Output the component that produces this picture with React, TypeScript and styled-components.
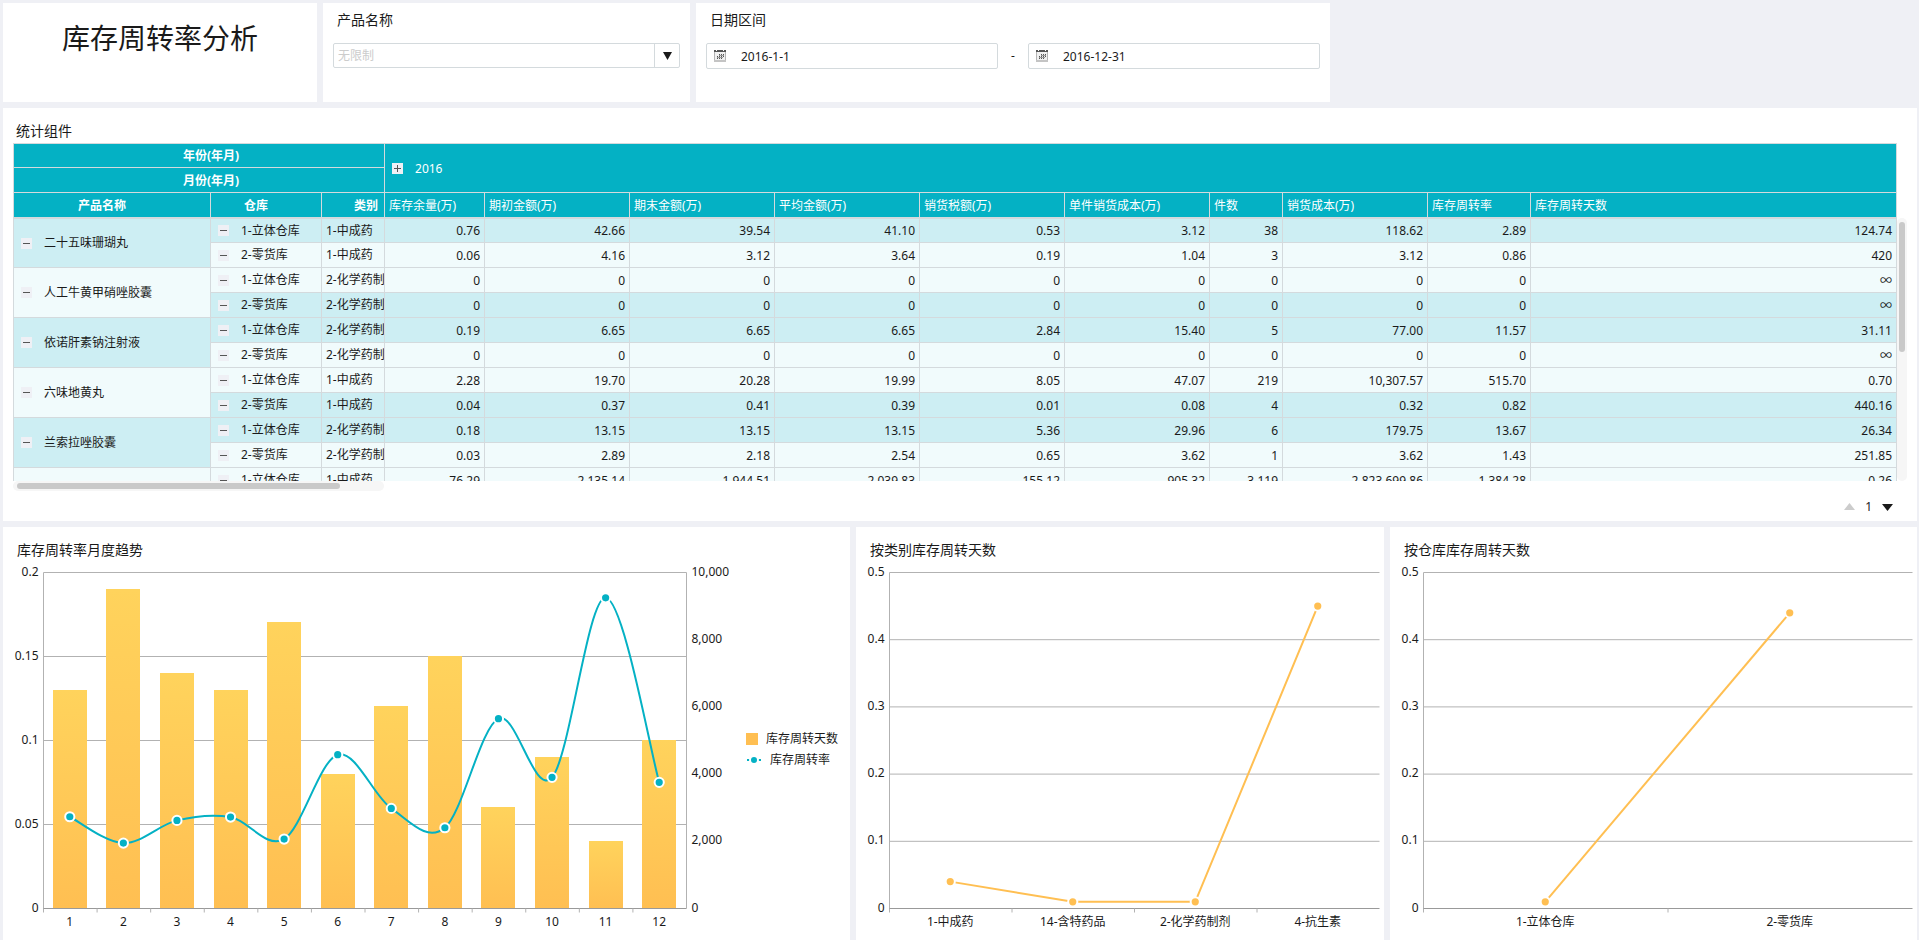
import React, { useId, useLayoutEffect, useRef, useState } from "react";
import styled, { createGlobalStyle } from "styled-components";

const color = {
  page: "#eff0f5",
  panel: "#ffffff",
  text: "#1a1a1a",
  muted: "#cccccc",
  border: "#d4dadd",
  teal: "#04b1c4",
  rowDark: "#cdeef3",
  rowLight: "#f1fbfc",
  amber: "#ffbf52",
  amberLight: "#ffd35c",
  grid: "#b2b2b2",
  axis: "#999999",
};

const GlobalStyle = createGlobalStyle`
  *, *::before, *::after { box-sizing: border-box; }
  body {
    margin: 0;
    background: ${color.page};
    color: ${color.text};
    font-family: "Noto Sans", "Noto Sans CJK SC", sans-serif;
    font-size: 12px;
    line-height: 16px;
  }
  button, input, select { font: inherit; color: inherit; }
`;

const Page = styled.main`
  display: flex;
  flex-direction: column;
  gap: 6px;
  min-height: 100vh;
  padding: 3px 2px 0 3px;
`;

const FilterRow = styled.div`
  display: grid;
  grid-template-columns: 314fr 367fr 634fr 581fr;
  gap: 6px;
`;

const ChartRow = styled.div`
  display: grid;
  grid-template-columns: 847fr 528fr 527fr;
  gap: 6px;
  flex: 1;
`;

const Panel = styled.section`
  min-width: 0;
  background: ${color.panel};
`;

const FilterPanel = styled(Panel)`
  min-height: 99px;
  padding: 7px 10px;
`;

const PageTitle = styled.h1`
  margin: 8px 0 0;
  font-size: 28px;
  line-height: 40px;
  font-weight: 400;
  text-align: center;
`;

const FilterLabel = styled.label`
  display: block;
  padding-left: 4px;
  margin-bottom: 13px;
  font-size: 14px;
  line-height: 20px;
`;

const ComboBox = styled.div`
  position: relative;
  height: 25px;
`;

const Select = styled.select`
  appearance: none;
  width: 100%;
  height: 100%;
  padding: 0 30px 0 4px;
  border: 1px solid ${color.border};
  border-radius: 2px;
  background: transparent;
  color: ${color.muted};
`;

const ComboArrow = styled.span`
  position: absolute;
  top: 1px;
  right: 1px;
  bottom: 1px;
  display: flex;
  align-items: center;
  justify-content: center;
  width: 25px;
  border-left: 1px solid ${color.border};
  pointer-events: none;
`;

const DateRange = styled.div`
  display: flex;
  align-items: center;
`;

const DateField = styled.div`
  display: flex;
  flex: 1;
  align-items: center;
  gap: 15px;
  height: 26px;
  padding-left: 7px;
  border: 1px solid ${color.border};
  border-radius: 2px;
`;

const DateInput = styled.input`
  flex: 1;
  min-width: 0;
  height: 24px;
  padding: 0;
  border: 0;
  background: transparent;
  outline: none;
`;

const DateDash = styled.span`
  width: 30px;
  text-align: center;
`;

const PanelTitle = styled.h2`
  margin: 0;
  font-size: 14px;
  line-height: 20px;
  font-weight: 400;
`;

const TablePanel = styled(Panel)`
  padding: 13px 10px 0;
`;

const TableTitle = styled(PanelTitle)`
  padding-left: 3px;
  margin-bottom: 2px;
`;

const TableFrame = styled.div`
  display: flex;
`;

const TableViewport = styled.div`
  flex: 1;
  min-width: 0;
  height: 338px;
  overflow: hidden;
`;

const DataTable = styled.table`
  width: 100%;
  table-layout: fixed;
  border-collapse: separate;
  border-spacing: 0;
  border: solid ${color.border};
  border-width: 1px 0 0 1px;
`;

const HeadRow = styled.tr<{ $height: number }>`
  height: ${(p) => p.$height}px;
`;

const HeadCell = styled.th<{ $measure?: boolean; $last?: boolean }>`
  padding: ${(p) => (p.$measure ? "1px 4px 0" : "1px 24px 0 4px")};
  overflow: hidden;
  border: solid ${color.border};
  border-width: 0 1px ${(p) => (p.$last ? 2 : 1)}px 0;
  background: ${color.teal};
  color: #ffffff;
  font-weight: ${(p) => (p.$measure ? 400 : 700)};
  text-align: ${(p) => (p.$measure ? "left" : "center")};
  white-space: nowrap;
`;

const BodyRow = styled.tr`
  height: 25px;
  &:first-child { height: 24px; }
`;

const Cell = styled.td<{ $dark: boolean; $number?: boolean }>`
  padding: ${(p) => (p.$number ? "1px 4px 0" : "0 4px")};
  overflow: hidden;
  border: solid ${color.border};
  border-width: 0 1px 1px 0;
  background: ${(p) => (p.$dark ? color.rowDark : color.rowLight)};
  text-align: ${(p) => (p.$number ? "right" : "left")};
  white-space: nowrap;
`;

/* The frozen columns are wider than their pane, so these headings are centred on the full width. */
const WideHeading = styled.div<{ $width: number }>`
  width: ${(p) => p.$width}px;
`;

const NodeLabel = styled.span`
  display: flex;
  align-items: center;
  gap: 12px;
  padding-left: 3px;
`;

const GroupName = styled.span`
  font-weight: 400;
`;

const ToggleButton = styled.button`
  display: flex;
  flex: none;
  width: 11px;
  height: 11px;
  padding: 0;
  border: 0;
  background: ${color.page};
  cursor: pointer;
`;

const VerticalTrack = styled.div`
  width: 10px;
  margin-top: 75px;
  padding: 4px 2px;
  border-radius: 5px;
  background: #f6f6f6;
`;

const VerticalThumb = styled.div`
  height: 130px;
  border-radius: 3px;
  background: #c9c9c9;
`;

const HorizontalTrack = styled.div`
  width: 371px;
  height: 10px;
  padding: 2px 4px;
  border-radius: 5px;
  background: #f6f6f6;
`;

const HorizontalThumb = styled.div`
  width: 323px;
  height: 6px;
  border-radius: 3px;
  background: #c9c9c9;
`;

const Pager = styled.nav`
  display: flex;
  align-items: center;
  justify-content: flex-end;
  gap: 10px;
  height: 30px;
  padding: 2px 14px 0;
`;

const PagerButton = styled.button`
  display: flex;
  padding: 0;
  border: 0;
  background: none;
  color: ${color.text};
  &:disabled { color: ${color.muted}; }
`;

const ChartPanel = styled(Panel)`
  padding-top: 13px;
`;

const ChartTitle = styled(PanelTitle)`
  padding: 0 14px;
  margin-bottom: 3px;
`;

const ChartSvg = styled.svg`
  display: block;
  width: 100%;
  height: 377px;
  font-size: 12px;
  fill: ${color.text};
`;

const measures: [string, number | undefined][] = [
  ["库存余量(万)", 100],
  ["期初金额(万)", 145],
  ["期末金额(万)", 145],
  ["平均金额(万)", 145],
  ["销货税额(万)", 145],
  ["单件销货成本(万)", 145],
  ["件数", 73],
  ["销货成本(万)", 145],
  ["库存周转率", 103],
  ["库存周转天数", undefined],
];

type Row = { store: string; kind: string; dark: boolean; values: string[] };
type Group = { name: string; dark: boolean; rows: Row[] };

const CHEM = "2-化学药制剂";
const HERB = "1-中成药";
const line = (store: string, kind: string, dark: boolean, values: string): Row => ({
  store,
  kind,
  dark,
  values: values.split(" "),
});

const groups: Group[] = [
  {
    name: "二十五味珊瑚丸",
    dark: true,
    rows: [
      line("1-立体仓库", HERB, true, "0.76 42.66 39.54 41.10 0.53 3.12 38 118.62 2.89 124.74"),
      line("2-零货库", HERB, false, "0.06 4.16 3.12 3.64 0.19 1.04 3 3.12 0.86 420"),
    ],
  },
  {
    name: "人工牛黄甲硝唑胶囊",
    dark: false,
    rows: [
      line("1-立体仓库", CHEM, false, "0 0 0 0 0 0 0 0 0 ∞"),
      line("2-零货库", CHEM, true, "0 0 0 0 0 0 0 0 0 ∞"),
    ],
  },
  {
    name: "依诺肝素钠注射液",
    dark: true,
    rows: [
      line("1-立体仓库", CHEM, true, "0.19 6.65 6.65 6.65 2.84 15.40 5 77.00 11.57 31.11"),
      line("2-零货库", CHEM, false, "0 0 0 0 0 0 0 0 0 ∞"),
    ],
  },
  {
    name: "六味地黄丸",
    dark: false,
    rows: [
      line("1-立体仓库", HERB, false, "2.28 19.70 20.28 19.99 8.05 47.07 219 10,307.57 515.70 0.70"),
      line("2-零货库", HERB, true, "0.04 0.37 0.41 0.39 0.01 0.08 4 0.32 0.82 440.16"),
    ],
  },
  {
    name: "兰索拉唑胶囊",
    dark: true,
    rows: [
      line("1-立体仓库", CHEM, true, "0.18 13.15 13.15 13.15 5.36 29.96 6 179.75 13.67 26.34"),
      line("2-零货库", CHEM, false, "0.03 2.89 2.18 2.54 0.65 3.62 1 3.62 1.43 251.85"),
    ],
  },
  {
    name: "",
    dark: false,
    rows: [
      line("1-立体仓库", HERB, false, "76.29 2,135.14 1,944.51 2,039.83 155.12 905.32 3,119 2,823,699.86 1,384.28 0.26"),
    ],
  },
];

function Toggle({ open, label }: { open: boolean; label: string }) {
  return (
    <ToggleButton type="button" aria-expanded={open} aria-label={label}>
      <svg width="11" height="11" viewBox="0 0 11 11" shapeRendering="crispEdges">
        <path d={open ? "M2 5.5H9" : "M2 5.5H9M5.5 2V9"} stroke="#555" fill="none" />
      </svg>
    </ToggleButton>
  );
}

function CalendarIcon() {
  return (
    <svg width="12" height="12" viewBox="0 0 12 12" shapeRendering="crispEdges" aria-hidden="true">
      <rect x="0.5" y="1.5" width="11" height="9" fill="#f0f0f0" stroke="#b4b4b4" />
      <path d="M0 11H12" stroke="#c4c4c4" strokeWidth="2" />
      <path d="M0 1H12" stroke="#555" strokeWidth="2" />
      <path d="M2 0.5H3M9 0.5H10" stroke="#fff" />
      <path d="M5 4.5H10M3 6.5H10M3 8.5H8" stroke="#555" strokeDasharray="1 1" />
      <path d="M5 5.5H10M3 7.5H9" stroke="#999" />
    </svg>
  );
}

function StatTable() {
  return (
    <TablePanel>
      <TableTitle>统计组件</TableTitle>
      <TableFrame>
        <TableViewport>
          <DataTable>
            <colgroup>
              <col width="197" />
              <col width="111" />
              <col width="63" />
              {measures.map(([name, width]) => (
                <col key={name} width={width} />
              ))}
            </colgroup>
            <thead>
              <HeadRow $height={24}>
                <HeadCell colSpan={3}>
                  <WideHeading $width={386}>年份(年月)</WideHeading>
                </HeadCell>
                <HeadCell colSpan={10} rowSpan={2} $measure>
                  <NodeLabel>
                    <Toggle open={false} label="展开 2016" />
                    2016
                  </NodeLabel>
                </HeadCell>
              </HeadRow>
              <HeadRow $height={25}>
                <HeadCell colSpan={3}>
                  <WideHeading $width={386}>月份(年月)</WideHeading>
                </HeadCell>
              </HeadRow>
              <HeadRow $height={26}>
                <HeadCell $last>产品名称</HeadCell>
                <HeadCell $last>仓库</HeadCell>
                <HeadCell $last>
                  <WideHeading $width={80}>类别</WideHeading>
                </HeadCell>
                {measures.map(([name]) => (
                  <HeadCell key={name} $last $measure>
                    {name}
                  </HeadCell>
                ))}
              </HeadRow>
            </thead>
            <tbody>
              {groups.map((group) =>
                group.rows.map((row, index) => (
                  <BodyRow key={group.name + row.store}>
                    {index === 0 && (
                      <Cell as="th" scope="rowgroup" rowSpan={group.rows.length} $dark={group.dark}>
                        {group.name && (
                          <NodeLabel>
                            <Toggle open label={`收起 ${group.name}`} />
                            <GroupName>{group.name}</GroupName>
                          </NodeLabel>
                        )}
                      </Cell>
                    )}
                    <Cell $dark={row.dark}>
                      <NodeLabel>
                        <Toggle open label={`收起 ${row.store}`} />
                        {row.store}
                      </NodeLabel>
                    </Cell>
                    <Cell $dark={row.dark}>{row.kind}</Cell>
                    {row.values.map((value, i) => (
                      <Cell key={measures[i][0]} $dark={row.dark} $number>
                        {value}
                      </Cell>
                    ))}
                  </BodyRow>
                )),
              )}
            </tbody>
          </DataTable>
        </TableViewport>
        <VerticalTrack>
          <VerticalThumb />
        </VerticalTrack>
      </TableFrame>
      <HorizontalTrack>
        <HorizontalThumb />
      </HorizontalTrack>
      <Pager aria-label="分页">
        <PagerButton type="button" disabled aria-label="上一页">
          <svg width="11" height="8" viewBox="0 0 11 8">
            <path d="M5.5 0L11 7H0Z" fill="currentColor" />
          </svg>
        </PagerButton>
        <span>1</span>
        <PagerButton type="button" aria-label="下一页">
          <svg width="11" height="8" viewBox="0 0 11 8">
            <path d="M0 1H11L5.5 8Z" fill="currentColor" />
          </svg>
        </PagerButton>
      </Pager>
    </TablePanel>
  );
}

function useWidth() {
  const ref = useRef<SVGSVGElement>(null);
  const [width, setWidth] = useState(0);
  useLayoutEffect(() => {
    const node = ref.current;
    if (!node) return;
    const update = () => setWidth(Math.round(node.getBoundingClientRect().width));
    update();
    const observer = new ResizeObserver(update);
    observer.observe(node);
    return () => observer.disconnect();
  }, []);
  return [ref, width] as const;
}

const TOP = 9.5;
const BOTTOM = 345.5;
const LABEL_Y = 363;
const TEXT_DROP = 3;

type Point = [number, number];

const scaleY = (value: number, max: number) => BOTTOM - (value / max) * (BOTTOM - TOP);

/* Centre of a category; the axis itself sits half a pixel to the right of the band's start. */
const bandCenter = (left: number, step: number, i: number) => Math.floor(left) + (i + 0.5) * step;

const straightPath = (points: Point[]) => "M" + points.map((p) => p.join(" ")).join("L");

function smoothPath(points: Point[]) {
  const at = (i: number) => points[Math.max(0, Math.min(points.length - 1, i))];
  let d = `M${points[0].join(" ")}`;
  for (let i = 0; i < points.length - 1; i++) {
    const [a, b, c, e] = [at(i - 1), at(i), at(i + 1), at(i + 2)];
    d += `C${b[0] + (c[0] - a[0]) / 6} ${b[1] + (c[1] - a[1]) / 6} ${c[0] - (e[0] - b[0]) / 6} ${
      c[1] - (e[1] - b[1]) / 6
    } ${c[0]} ${c[1]}`;
  }
  return d;
}

type FrameProps = { left: number; right: number; ticks: string[]; categories: string[]; children?: React.ReactNode };

function ChartFrame({ left, right, ticks, categories, children }: FrameProps) {
  const step = (right - left) / categories.length;
  const gap = (BOTTOM - TOP) / (ticks.length - 1);
  return (
    <>
      {ticks.map((tick, i) => (
        <g key={tick}>
          {i > 0 && <path d={`M${left} ${BOTTOM - i * gap}H${right}`} stroke={color.grid} />}
          <text x={left - 5} y={BOTTOM - i * gap + TEXT_DROP} textAnchor="end">
            {tick}
          </text>
        </g>
      ))}
      {children}
      <path d={`M${left} ${TOP}V${BOTTOM + 4}`} stroke={color.grid} fill="none" />
      <path d={`M${left} ${BOTTOM}H${right}`} stroke={color.axis} />
      {categories.map((name, i) => (
        <g key={name}>
          {i > 0 && <path d={`M${left + i * step} ${BOTTOM}v4`} stroke={color.grid} />}
          <text x={bandCenter(left, step, i)} y={LABEL_Y} textAnchor="middle">
            {name}
          </text>
        </g>
      ))}
    </>
  );
}

function Markers({ points, fill }: { points: Point[]; fill: string }) {
  return (
    <>
      {points.map(([x, y]) => (
        <circle key={x} cx={x} cy={y} r="4.6" fill={fill} stroke="#fff" strokeWidth="2" />
      ))}
    </>
  );
}

const days = [0.13, 0.19, 0.14, 0.13, 0.17, 0.08, 0.12, 0.15, 0.06, 0.09, 0.04, 0.1];
const rates = [2731, 1946, 2622, 2721, 2066, 4578, 2979, 2403, 5650, 3903, 9245, 3754];
const months = days.map((_, i) => String(i + 1));

function TrendChart() {
  const [ref, width] = useWidth();
  const gradient = useId();
  const left = 40.5;
  const right = width - 163.5;
  const step = (right - left) / months.length;
  const points = rates.map((v, i): Point => [bandCenter(left, step, i), scaleY(v, 10000)]);
  const legend = width - 104;
  return (
    <ChartPanel>
      <ChartTitle>库存周转率月度趋势</ChartTitle>
      <ChartSvg ref={ref} role="img" aria-label="库存周转率月度趋势">
        {width > 300 && (
          <>
            <defs>
              <linearGradient id={gradient} x1="0" y1="0" x2="0" y2="1">
                <stop offset="0" stopColor={color.amberLight} />
                <stop offset="1" stopColor={color.amber} />
              </linearGradient>
            </defs>
            <ChartFrame left={left} right={right} ticks={["0", "0.05", "0.1", "0.15", "0.2"]} categories={months}>
              {days.map((v, i) => (
                <rect
                  key={i}
                  x={Math.round(points[i][0] - 17)}
                  y={Math.floor(scaleY(v, 0.2))}
                  width="34"
                  height={BOTTOM - Math.floor(scaleY(v, 0.2))}
                  fill={`url(#${gradient})`}
                />
              ))}
            </ChartFrame>
            <path d={`M${right} ${TOP}V${BOTTOM}`} stroke={color.grid} />
            {["0", "2,000", "4,000", "6,000", "8,000", "10,000"].map((tick, i) => (
              <text key={tick} x={right + 5} y={BOTTOM - (i * (BOTTOM - TOP)) / 5 + TEXT_DROP}>
                {tick}
              </text>
            ))}
            <path d={smoothPath(points)} fill="none" stroke={color.teal} strokeWidth="2" />
            <Markers points={points} fill={color.teal} />
            <rect x={legend} y="170" width="12" height="12" fill={color.amber} />
            <text x={legend + 20} y="180">
              库存周转天数
            </text>
            <path d={`M${legend + 1} 197h14`} stroke={color.teal} strokeWidth="2" />
            <circle cx={legend + 8} cy="197" r="4" fill={color.teal} stroke="#fff" strokeWidth="2" />
            <text x={legend + 24} y="201">
              库存周转率
            </text>
          </>
        )}
      </ChartSvg>
    </ChartPanel>
  );
}

type LineChartProps = { title: string; categories: string[]; values: number[] };

function LineChart({ title, categories, values }: LineChartProps) {
  const [ref, width] = useWidth();
  const left = 33.5;
  const right = width - 4.5;
  const step = (right - left) / categories.length;
  const points = values.map((v, i): Point => [bandCenter(left, step, i), scaleY(v, 0.5)]);
  return (
    <ChartPanel>
      <ChartTitle>{title}</ChartTitle>
      <ChartSvg ref={ref} role="img" aria-label={title}>
        {width > 100 && (
          <>
            <ChartFrame
              left={left}
              right={right}
              ticks={["0", "0.1", "0.2", "0.3", "0.4", "0.5"]}
              categories={categories}
            />
            <path d={straightPath(points)} fill="none" stroke={color.amber} strokeWidth="2" />
            <Markers points={points} fill={color.amber} />
          </>
        )}
      </ChartSvg>
    </ChartPanel>
  );
}

export default function App() {
  return (
    <>
      <GlobalStyle />
      <Page>
        <FilterRow>
          <FilterPanel>
            <PageTitle>库存周转率分析</PageTitle>
          </FilterPanel>
          <FilterPanel>
            <FilterLabel htmlFor="product">产品名称</FilterLabel>
            <ComboBox>
              <Select id="product" defaultValue="">
                <option value="">无限制</option>
                {groups
                  .filter((g) => g.name)
                  .map((g) => (
                    <option key={g.name}>{g.name}</option>
                  ))}
              </Select>
              <ComboArrow>
                <svg width="9" height="8" viewBox="0 0 9 8">
                  <path d="M0 0H9L4.5 8Z" fill={color.text} />
                </svg>
              </ComboArrow>
            </ComboBox>
          </FilterPanel>
          <FilterPanel>
            <FilterLabel htmlFor="date-from">日期区间</FilterLabel>
            <DateRange>
              <DateField>
                <CalendarIcon />
                <DateInput id="date-from" defaultValue="2016-1-1" />
              </DateField>
              <DateDash>-</DateDash>
              <DateField>
                <CalendarIcon />
                <DateInput aria-label="结束日期" defaultValue="2016-12-31" />
              </DateField>
            </DateRange>
          </FilterPanel>
        </FilterRow>
        <StatTable />
        <ChartRow>
          <TrendChart />
          <LineChart
            title="按类别库存周转天数"
            categories={["1-中成药", "14-含特药品", "2-化学药制剂", "4-抗生素"]}
            values={[0.04, 0.01, 0.01, 0.45]}
          />
          <LineChart title="按仓库库存周转天数" categories={["1-立体仓库", "2-零货库"]} values={[0.01, 0.44]} />
        </ChartRow>
      </Page>
    </>
  );
}
